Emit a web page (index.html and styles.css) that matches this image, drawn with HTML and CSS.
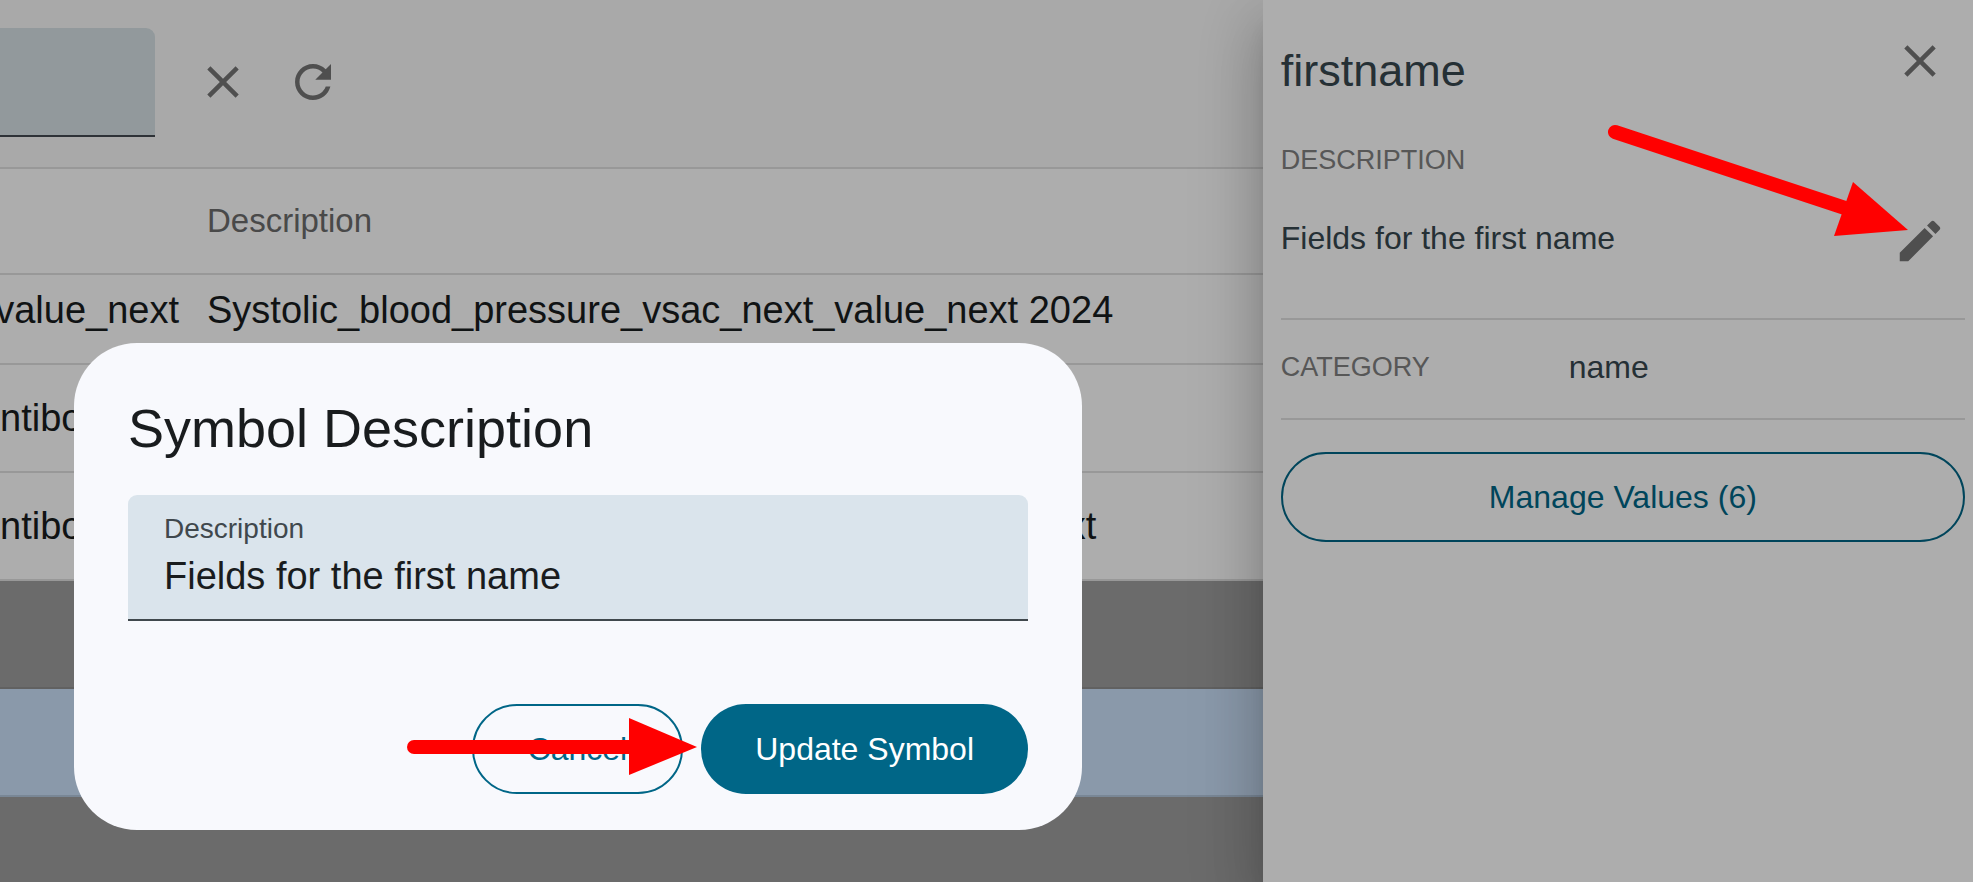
FILE: index.html
```html
<!DOCTYPE html>
<html lang="en">
<head>
    <meta charset="UTF-8">
    <meta name="viewport" content="width=device-width, initial-scale=1.0">
    <title>Symbols</title>
    <link rel="stylesheet" href="styles.css">
</head>
<body>
    <main class="content">
        <div class="toolbar">
            <input type="text" class="filter" aria-label="Filter symbols">
            <button class="icon-btn" aria-label="Clear">
                <svg viewBox="0 0 24 24"><path d="M19 6.41 17.59 5 12 10.59 6.41 5 5 6.41 10.59 12 5 17.59 6.41 19 12 13.41 17.59 19 19 17.59 13.41 12z"/></svg>
            </button>
            <button class="icon-btn" aria-label="Refresh">
                <svg viewBox="0 0 24 24"><path d="M17.65 6.35C16.2 4.9 14.21 4 12 4c-4.42 0-7.99 3.58-7.99 8s3.57 8 7.99 8c3.73 0 6.84-2.55 7.73-6h-2.08c-.82 2.33-3.04 4-5.65 4-3.31 0-6-2.69-6-6s2.69-6 6-6c1.66 0 3.14.69 4.22 1.78L13 11h7V4l-2.35 2.35z"/></svg>
            </button>
        </div>
        <table class="symbols">
            <thead>
                <tr><th class="name-col" aria-label="Name"></th><th>Description</th></tr>
            </thead>
            <tbody>
                <tr class="first"><td class="long">value_next</td><td>Systolic_blood_pressure_vsac_next_value_next 2024</td></tr>
                <tr><td>ntibody</td><td></td></tr>
                <tr><td>ntibody</td><td>Antibody_blood_pressure_lot_vsac_next_value_next</td></tr>
                <tr class="disabled"><td></td><td></td></tr>
                <tr class="selected"><td></td><td></td></tr>
                <tr class="disabled"><td></td><td></td></tr>
            </tbody>
        </table>
    </main>

    <aside class="details">
        <div class="details-header">
            <h2>firstname</h2>
            <button class="icon-btn" aria-label="Close">
                <svg viewBox="0 0 24 24"><path d="M19 6.41 17.59 5 12 10.59 6.41 5 5 6.41 10.59 12 5 17.59 6.41 19 12 13.41 17.59 19 19 17.59 13.41 12z"/></svg>
            </button>
        </div>
        <h3 class="caption">DESCRIPTION</h3>
        <div class="description">
            <p>Fields for the first name</p>
            <button class="icon-btn" aria-label="Edit description">
                <svg viewBox="0 0 24 24"><path d="M3 17.25V21h3.75L17.81 9.94l-3.75-3.75L3 17.25zM20.71 7.04c.39-.39.39-1.02 0-1.41l-2.34-2.34c-.39-.39-1.02-.39-1.41 0l-1.83 1.83 3.75 3.75 1.83-1.83z"/></svg>
            </button>
        </div>
        <div class="category">
            <h3 class="caption">CATEGORY</h3>
            <p>name</p>
        </div>
        <button class="btn outlined">Manage Values (6)</button>
    </aside>

    <div class="backdrop">
        <form class="dialog" role="dialog" aria-labelledby="dialogTitle">
            <h1 id="dialogTitle">Symbol Description</h1>
            <div class="field">
                <label for="description">Description</label>
                <input type="text" id="description" value="Fields for the first name">
            </div>
            <div class="actions">
                <button type="button" class="btn outlined">Cancel</button>
                <button type="button" class="btn filled">Update Symbol</button>
                <svg class="arrow arrow-update" width="290" height="60" viewBox="0 0 290 60">
                    <path class="shaft" d="M7 30H226"/>
                    <path d="M222 1 290 30 222 58z"/>
                </svg>
            </div>
        </form>
    </div>
    <svg class="arrow arrow-edit" width="300" height="120" viewBox="0 0 300 120">
        <path class="shaft" d="M7 8 240 85"/>
        <path d="M245 58 300 106 226 112z"/>
    </svg>
</body>
</html>
```
FILE: styles.css
```css
* {
    box-sizing: border-box;
}
body {
    display: flex;
    height: 100vh;
    margin: 0;
    overflow: hidden;
    font-family: "Liberation Sans", Arial, sans-serif;
    font-size: 32px;
    background-color: #ffffff;
}
h1, h2, h3, p {
    margin: 0;
    font-weight: normal;
}
button, input {
    font-family: inherit;
    font-size: inherit;
}
.content {
    flex: 1;
    min-width: 0;
    overflow: hidden;
}
.toolbar {
    display: flex;
    align-items: center;
    height: 169px;
    padding-bottom: 3px;
    background-color: #fafafa;
    border-bottom: 2px solid #e0e0e0;
}
.filter {
    width: 155px;
    height: 109px;
    margin-right: 23px;
    border: none;
    border-bottom: 2px solid #444b52;
    border-radius: 0 9px 0 0;
    background-color: #d7e2e6;
}
.icon-btn {
    width: 90px;
    height: 90px;
    padding: 18px;
    border: none;
    background: none;
    cursor: pointer;
}
.icon-btn svg {
    display: block;
    width: 54px;
    height: 54px;
    fill: #757575;
}

/* Symbols table */
.symbols {
    width: 100%;
    table-layout: fixed;
    border-spacing: 0;
}
th, td {
    padding: 0;
    text-align: left;
    border-bottom: 2px solid #e0e0e0;
}
th {
    height: 106px;
    font-size: 33px;
    font-weight: normal;
    color: #6c6c6c;
}
td {
    height: 108px;
    font-size: 38px;
    white-space: nowrap;
    color: #191c1e;
}
.name-col {
    width: 207px;
}
.first td {
    height: 90px;
    padding-bottom: 18px;
}
td.long {
    direction: rtl;
    padding-right: 28px;
}
.disabled td {
    background-color: #9e9e9e;
    border-color: #8f8f8f;
}
.selected td {
    background-color: #cce2fb;
    border-color: #b3c7dd;
}

/* Details panel */
.details {
    z-index: 1;
    width: 36%;
    padding: 16px 8px 0 18px;
    background-color: #ffffff;
    color: #37474f;
    box-shadow: 0 18px 22px -11px rgba(0, 0, 0, 0.2),
        0 36px 54px 4px rgba(0, 0, 0, 0.14),
        0 14px 68px 11px rgba(0, 0, 0, 0.12);
}
.details-header {
    display: flex;
    justify-content: space-between;
}
.details-header h2 {
    padding-top: 29px;
    font-size: 45px;
    line-height: 52px;
}
.caption {
    font-size: 27px;
    line-height: 32px;
    color: #808080;
}
.details > .caption {
    margin-top: 38px;
}
.description {
    display: flex;
    justify-content: space-between;
    height: 144px;
    border-bottom: 2px solid #e0e0e0;
}
.description p {
    padding-top: 44px;
    line-height: 36px;
}
.description .icon-btn {
    margin-top: 20px;
}
.category {
    display: flex;
    align-items: center;
    height: 100px;
    margin-bottom: 32px;
    padding-bottom: 4px;
    border-bottom: 2px solid #e0e0e0;
}
.category .caption {
    width: 288px;
}
.btn {
    height: 90px;
    padding: 0 54px;
    border: none;
    border-radius: 45px;
    cursor: pointer;
}
.outlined {
    border: 2px solid #006687;
    background: none;
    color: #006687;
}
.filled {
    background-color: #006687;
    color: #ffffff;
}
.details .btn {
    width: 100%;
}

/* Dialog */
.backdrop {
    position: fixed;
    inset: 0;
    z-index: 2;
    display: flex;
    align-items: flex-end;
    padding: 0 0 52px 74px;
    background-color: rgba(0, 0, 0, 0.32);
}
.dialog {
    width: 100%;
    max-width: 1008px;
    padding: 54px 54px 36px;
    border-radius: 63px;
    background-color: #f8f9fd;
    color: #191c1e;
}
.dialog h1 {
    font-size: 54px;
    line-height: 62px;
}
.field {
    height: 126px;
    margin: 36px 0 83px;
    padding: 16px 36px 0;
    border-bottom: 2px solid #40484d;
    border-radius: 9px 9px 0 0;
    background-color: #dae4ec;
}
.field label {
    display: block;
    font-size: 28px;
    line-height: 36px;
    color: #40484d;
}
.field input {
    display: block;
    width: 100%;
    height: 58px;
    padding: 0;
    border: none;
    outline: none;
    background: none;
    font-size: 38px;
    color: #191c1e;
}
.actions {
    position: relative;
    display: flex;
    justify-content: flex-end;
    gap: 18px;
}

/* Callout arrows */
.arrow {
    position: absolute;
    fill: #ff0000;
}
.shaft {
    stroke: #ff0000;
    stroke-width: 14px;
    stroke-linecap: round;
}
.arrow-update {
    top: 13px;
    right: 331px;
}
.arrow-edit {
    z-index: 3;
    top: 124px;
    right: 65px;
}
```
